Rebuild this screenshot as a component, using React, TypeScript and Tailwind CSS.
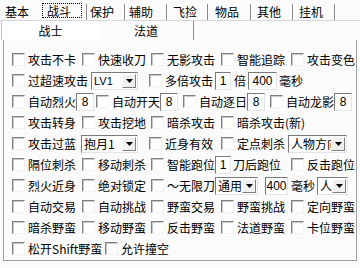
import React from "react";

function Cb() {
  return (
    <span className="inline-block w-[13px] h-[13px] shrink-0 border border-t-[#808080] border-l-[#808080] border-r-[#f2f2f2] border-b-[#f2f2f2] bg-white shadow-[inset_1px_1px_0_#c8c8c8]" />
  );
}

function Txt({ children, cls = "" }: { children: React.ReactNode; cls?: string }) {
  return <span className={`whitespace-nowrap leading-[14px] ${cls}`}>{children}</span>;
}

function Item({ label, cls = "" }: { label: string; cls?: string }) {
  return (
    <div className={`flex items-center shrink-0 ${cls}`}>
      <Cb />
      <Txt cls="ml-[3px]">{label}</Txt>
    </div>
  );
}

function Edit({ v, cls = "" }: { v: string; cls?: string }) {
  return (
    <span
      className={`h-[18px] shrink-0 flex items-center justify-center bg-white border border-t-[#7a7a7a] border-l-[#7a7a7a] border-r-[#e4e4e4] border-b-[#e4e4e4] font-['Liberation_Sans',sans-serif] text-[12px] leading-none ${cls}`}
    >
      {v}
    </span>
  );
}

function Arrow() {
  return (
    <span className="w-[14px] h-[14px] shrink-0 bg-[#f0f0f0] border border-t-white border-l-white border-r-[#808080] border-b-[#808080] flex items-center justify-center">
      <svg width="7" height="4" viewBox="0 0 7 4">
        <polygon points="0,0 7,0 3.5,4" fill="#000" />
      </svg>
    </span>
  );
}

function Combo({ v, cls = "", latin = false }: { v: string; cls?: string; latin?: boolean }) {
  return (
    <span
      className={`h-[18px] shrink-0 flex items-center bg-white border border-t-[#7a7a7a] border-l-[#7a7a7a] border-r-[#e4e4e4] border-b-[#e4e4e4] pr-[1px] ${cls}`}
    >
      <span
        className={`flex-1 overflow-hidden whitespace-nowrap pl-[2px] leading-[14px] ${latin ? "font-['Liberation_Sans',sans-serif] text-[11px]" : ""}`}
      >
        {v}
      </span>
      <Arrow />
    </span>
  );
}

function Sep() {
  return <span className="self-end w-[2px] h-[16px] shrink-0 border-l border-l-[#8a8a8a] border-r border-r-white" />;
}

function Row({ children }: { children: React.ReactNode }) {
  return <div className="h-[21px] flex items-center">{children}</div>;
}

export default function App() {
  return (
    <div className="w-[360px] h-[268px] overflow-hidden bg-[#fbfbfb] text-black text-[12px] font-['Noto_Sans_CJK_SC',sans-serif]">
      {/* top tabs */}
      <div className="h-[20px] flex items-center">
        <div className="w-[42px] pl-[5px] pt-[4px] shrink-0">
          <Txt>基本</Txt>
        </div>
        <div className="w-[40px] h-[15px] mt-[1px] shrink-0 border border-dotted border-black flex items-center pl-[4px]">
          <Txt>战斗</Txt>
        </div>
        <div className="w-[4px] shrink-0" />
        <Sep />
        <div className="w-[36px] pl-[2px] pt-[4px] shrink-0"><Txt>保护</Txt></div>
        <Sep />
        <div className="w-[40px] pl-[3px] pt-[4px] shrink-0"><Txt>辅助</Txt></div>
        <Sep />
        <div className="w-[39px] pl-[5px] pt-[4px] shrink-0"><Txt>飞捡</Txt></div>
        <Sep />
        <div className="w-[41px] pl-[6px] pt-[4px] shrink-0"><Txt>物品</Txt></div>
        <Sep />
        <div className="w-[40px] pl-[5px] pt-[4px] shrink-0"><Txt>其他</Txt></div>
        <Sep />
        <div className="w-[40px] pl-[5px] pt-[4px] shrink-0"><Txt>挂机</Txt></div>
        <Sep />
      </div>

      {/* sub tabs */}
      <div className="h-[20px] flex border-t border-[#d6d6d6]">
        <div className="w-[98px] ml-[1px] border-l border-[#c4c4c4] bg-white flex items-center justify-center pt-[1px]">
          <Txt>战士</Txt>
        </div>
        <div className="w-[95px] border-r border-[#8a8a8a] flex items-center justify-center pt-[1px]">
          <Txt>法道</Txt>
        </div>
      </div>

      {/* group */}
      <div className="ml-[3px] w-[354px] h-[221px] border-l border-r border-b border-[#a0a0a0] pl-[8px] pt-[9px] overflow-hidden">
        <Row>
          <Item label="攻击不卡" cls="w-[70px]" />
          <Item label="快速收刀" cls="w-[69px]" />
          <Item label="无影攻击" cls="w-[70px]" />
          <Item label="智能追踪" cls="w-[70px]" />
          <Item label="攻击变色" />
        </Row>
        <Row>
          <Item label="过超速攻击" cls="w-[79px]" />
          <Combo v="LV1" cls="w-[47px]" latin />
          <Item label="多倍攻击" cls="ml-[11px]" />
          <Edit v="1" cls="ml-[2px] w-[16px]" />
          <Txt cls="ml-[3px]">倍</Txt>
          <Edit v="400" cls="ml-[2px] w-[29px]" />
          <Txt cls="ml-[2px]">毫秒</Txt>
        </Row>
        <Row>
          <div className="w-[84px] flex items-center shrink-0">
            <Item label="自动烈火" />
            <Edit v="8" cls="w-[18px]" />
          </div>
          <div className="w-[87px] flex items-center shrink-0">
            <Item label="自动开天" />
            <Edit v="8" cls="w-[18px]" />
          </div>
          <div className="w-[87px] flex items-center shrink-0">
            <Item label="自动逐日" />
            <Edit v="8" cls="w-[18px]" />
          </div>
          <div className="flex items-center shrink-0">
            <Item label="自动龙影" />
            <Edit v="8" cls="w-[18px]" />
          </div>
        </Row>
        <Row>
          <Item label="攻击转身" cls="w-[70px]" />
          <Item label="攻击挖地" cls="w-[69px]" />
          <Item label="暗杀攻击" cls="w-[70px]" />
          <Item label="暗杀攻击(新)" />
        </Row>
        <Row>
          <Item label="攻击过蓝" cls="w-[69px]" />
          <Combo v="抱月1" cls="w-[57px]" />
          <Item label="近身有效" cls="ml-[11px] w-[72px]" />
          <Item label="定点刺杀" />
          <Combo v="人物方向" cls="ml-[3px] w-[59px]" />
        </Row>
        <Row>
          <Item label="隔位刺杀" cls="w-[70px]" />
          <Item label="移动刺杀" cls="w-[69px]" />
          <Item label="智能跑位" />
          <Edit v="1" cls="w-[16px]" />
          <Txt cls="ml-[2px]">刀后跑位</Txt>
          <Item label="反击跑位" cls="ml-[10px]" />
        </Row>
        <Row>
          <Item label="烈火近身" cls="w-[70px]" />
          <Item label="绝对锁定" cls="w-[69px]" />
          <Item label="～无限刀" />
          <Combo v="通用" cls="w-[43px]" />
          <Edit v="400" cls="ml-[7px] w-[23px]" />
          <Txt cls="ml-[3px]">毫秒</Txt>
          <Combo v="人" cls="ml-[2px] w-[31px]" />
        </Row>
        <Row>
          <Item label="自动交易" cls="w-[70px]" />
          <Item label="自动挑战" cls="w-[69px]" />
          <Item label="野蛮交易" cls="w-[70px]" />
          <Item label="野蛮挑战" cls="w-[70px]" />
          <Item label="定向野蛮" />
        </Row>
        <Row>
          <Item label="暗杀野蛮" cls="w-[70px]" />
          <Item label="移动野蛮" cls="w-[69px]" />
          <Item label="反击野蛮" cls="w-[70px]" />
          <Item label="法道野蛮" cls="w-[70px]" />
          <Item label="卡位野蛮" />
        </Row>
        <Row>
          <Item label="松开Shift野蛮" cls="w-[93px]" />
          <Item label="允许撞空" />
        </Row>
      </div>
    </div>
  );
}
